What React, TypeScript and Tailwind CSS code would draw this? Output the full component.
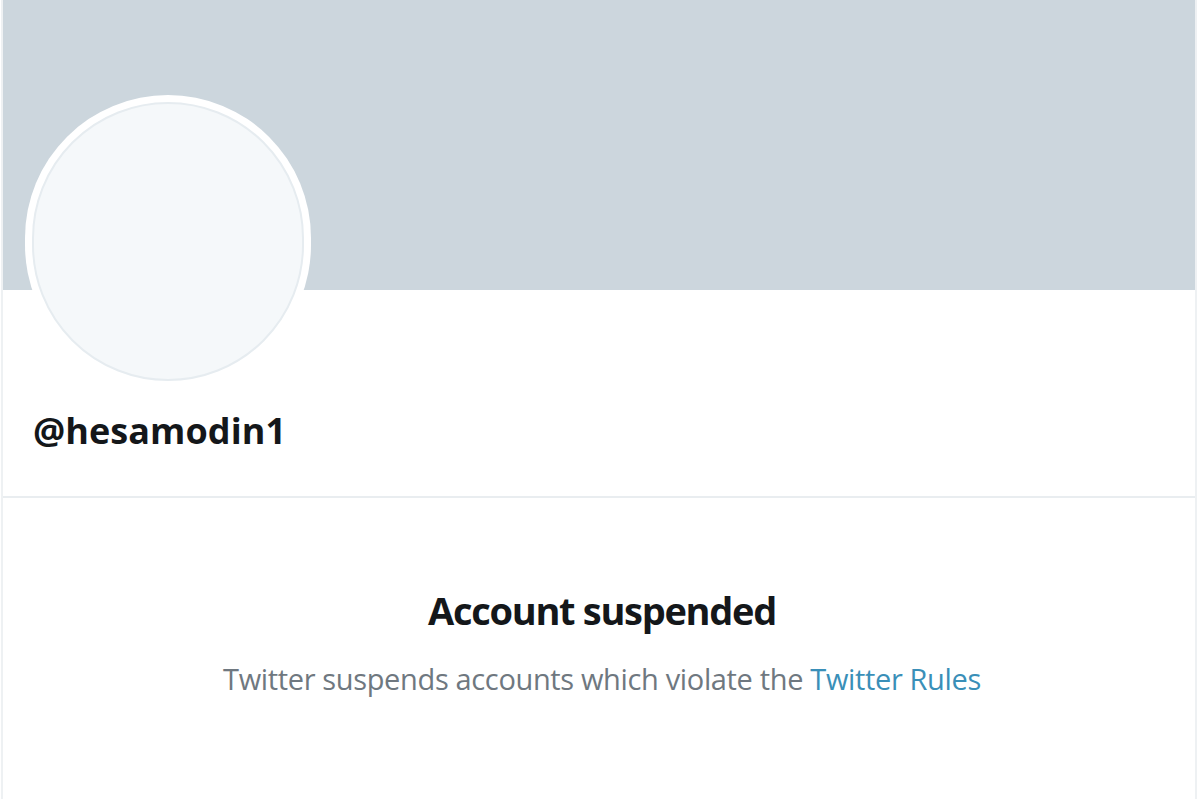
export default function App() {
  return (
    <div className="w-[1200px] h-[799px] bg-white overflow-hidden" style={{ fontFamily: '"Open Sans", "Noto Sans", sans-serif' }}>
      <div className="h-full ml-[1px] mr-[3px] border-l-2 border-r-2 border-[#eef1f3] flex flex-col">
        <div className="h-[290px] bg-[#ccd6dd] shrink-0" />
        <div className="px-[22px] -mt-[195px]">
          <div className="w-[286px] h-[293px] rounded-full bg-white p-[7px]">
            <div className="w-full h-full rounded-full bg-[#f5f8fa] border-2 border-[#e6ecf0]" />
          </div>
        </div>
        <div className="px-[30px] pt-[21px] h-[108px]">
          <div className="text-[36px] font-bold text-[#14171a] leading-[44px] tracking-[0.05px]">@hesamodin1</div>
        </div>
        <div className="h-[2px] bg-[#e9edf0]" />
        <div className="flex flex-col items-center pt-[88px] pl-[6px]">
          <div className="text-[38px] font-bold text-[#14171a] leading-[48px] tracking-[-1.3px]">Account suspended</div>
          <div className="mt-[27px] text-[29px] text-[#6f7880] leading-[36px] tracking-[-0.35px]">
            Twitter suspends accounts which violate the <span className="text-[#3a8fb8]">Twitter Rules</span>
          </div>
        </div>
      </div>
    </div>
  );
}
